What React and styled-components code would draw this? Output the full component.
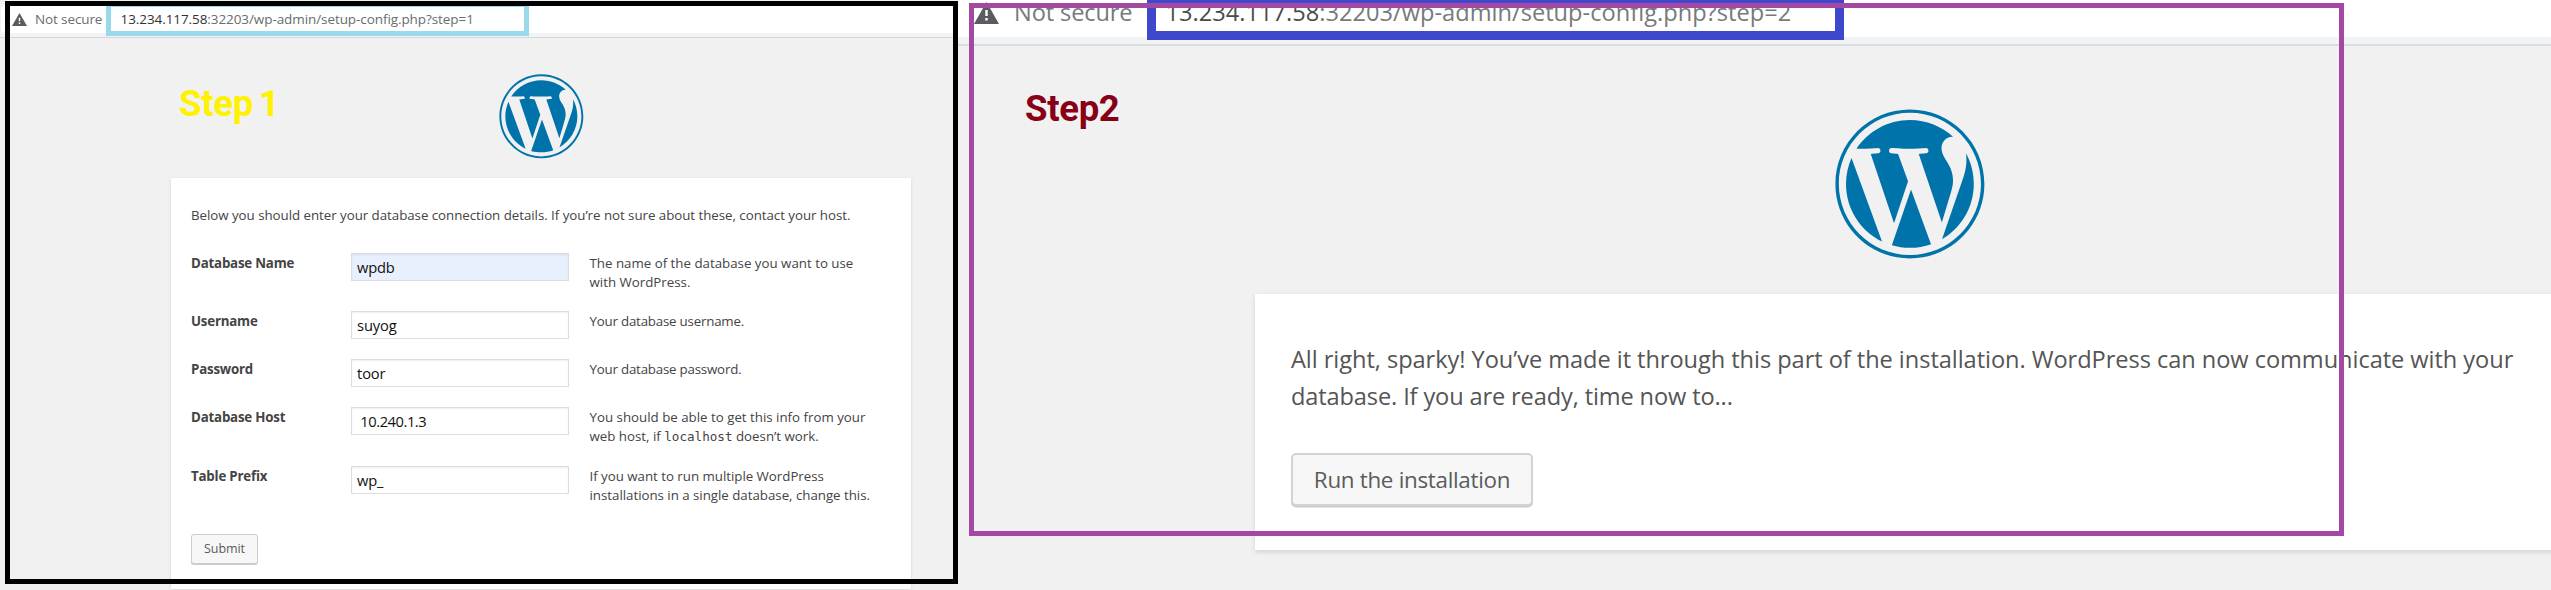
import React from "react";
import styled, { createGlobalStyle } from "styled-components";
import { FaWordpress } from "react-icons/fa";

const GlobalStyle = createGlobalStyle`
  *, *::before, *::after { box-sizing: border-box; }
  html, body { margin: 0; background: #f1f1f1; }
  body {
    overflow: hidden;
    font-family: "Open Sans", "Noto Sans", sans-serif;
    color: #444;
  }
  p { margin: 0; }
`;

const Page = styled.div`
  position: relative;
  display: flex;
  width: 2551px;
  height: 590px;
  overflow: hidden;
`;

const Panel = styled.section`
  flex: none;
  width: ${(p) => p.$width}px;
  height: 590px;
  overflow: hidden;
  background: #f1f1f1;
`;

/* Browser address bar */
const Toolbar = styled.header`
  height: ${(p) => (p.$large ? 46 : 38)}px;
  padding: ${(p) => (p.$large ? "0" : "5px 0 0 1px")};
  border-bottom: ${(p) => (p.$large ? "2px solid #d9dce0" : "1px solid #d5d7da")};
  background: #f2f3f5;
`;

const AddressBar = styled.div`
  display: flex;
  align-items: center;
  height: ${(p) => (p.$large ? 37 : 28)}px;
  padding: ${(p) => (p.$large ? "0 0 12px 16px" : "0 0 0 11px")};
  border-radius: ${(p) => (p.$large ? 0 : "5px 0 0 5px")};
  background: #fff;
  font-size: ${(p) => (p.$large ? 23.6 : 13.5)}px;
  line-height: ${(p) => (p.$large ? 25 : 28)}px;
  white-space: pre;
`;

const Warning = styled.svg`
  flex: none;
  width: ${(p) => (p.$large ? 25 : 15)}px;
  height: ${(p) => (p.$large ? 22 : 13)}px;
`;

const Security = styled.span`
  flex: none;
  width: ${(p) => (p.$large ? 151.5 : 85.5)}px;
  margin-left: ${(p) => (p.$large ? 15 : 8)}px;
  color: ${(p) => (p.$large ? "#77797c" : "#6a6c6f")};
  letter-spacing: -0.12px;
`;

const Url = styled.span`
  color: ${(p) => (p.$large ? "#77797c" : "#6a6c6f")};
  letter-spacing: ${(p) => (p.$large ? 0.02 : -0.08)}px;
`;

const Host = styled.span`
  color: ${(p) => (p.$large ? "#4b4b4e" : "#333")};
`;

/* WordPress set-up page */
const LogoRow = styled.div`
  display: flex;
  justify-content: center;
  width: ${(p) => p.$width}px;
  margin-left: ${(p) => p.$left}px;
  padding-top: ${(p) => p.$top}px;
  color: #0073aa;
  svg { display: block; }
`;

const Card = styled.main`
  width: ${(p) => p.$width}px;
  height: ${(p) => p.$height}px;
  margin: ${(p) => p.$margin};
  padding: ${(p) => p.$padding};
  background: #fff;
  box-shadow: ${(p) =>
    p.$large ? "0 2px 5px rgba(0,0,0,.13)" : "0 1px 3px rgba(0,0,0,.13)"};
`;

const Intro = styled.p`
  font-size: 13.3px;
  line-height: 19px;
  letter-spacing: -0.03px;
  white-space: nowrap;
`;

const Fields = styled.div`
  display: grid;
  grid-template-columns: 160px 218px 1fr;
  grid-template-rows: 58px 48px 48px 59px 68px;
  margin-top: 28px;
`;

const Label = styled.label`
  padding-top: 1px;
  font-size: 13.3px;
  font-weight: 700;
  line-height: 19px;
  letter-spacing: -0.2px;
`;

const TextInput = styled.input`
  width: 218px;
  height: 28px;
  margin: 0;
  padding: 1px 5px 0;
  border: 1px solid #ddd;
  border-radius: 0;
  outline: 0;
  background: ${(p) => (p.$filled ? "#e8f0fe" : "#fff")};
  box-shadow: inset 0 1px 2px rgba(0, 0, 0, 0.07);
  color: #111;
  font: 14.7px "Open Sans", "Noto Sans", sans-serif;
  letter-spacing: ${(p) => p.$tracking}px;
`;

const Help = styled.p`
  padding: 1px 0 0 20.5px;
  font-size: 13.3px;
  line-height: 19px;
  letter-spacing: ${(p) => p.$tracking}px;
  white-space: nowrap;
`;

const Code = styled.code`
  font: 12.6px/1 "DejaVu Sans Mono", monospace;
  letter-spacing: 0;
`;

const Button = styled.button`
  display: block;
  width: ${(p) => (p.$large ? 242 : 67)}px;
  height: ${(p) => (p.$large ? 53 : 30)}px;
  margin: ${(p) => (p.$large ? "37px 0 0" : "0")};
  padding: 0;
  border: ${(p) => (p.$large ? 2 : 1)}px solid ${(p) => (p.$large ? "#d3d3d3" : "#ccc")};
  border-radius: ${(p) => (p.$large ? 5 : 3)}px;
  background: #f7f7f7;
  box-shadow: 0 ${(p) => (p.$large ? 1.5 : 1)}px 0 #ccc;
  color: #5b5b5b;
  font: ${(p) => (p.$large ? 22.4 : 12.5)}px "Open Sans", "Noto Sans", sans-serif;
  letter-spacing: ${(p) => (p.$large ? -0.3 : -0.1)}px;
`;

const Message = styled.p`
  font-size: 23.6px;
  line-height: 37.3px;
  color: #555;
  white-space: nowrap;
`;

const Line = styled.span`
  display: block;
  letter-spacing: ${(p) => p.$tracking}px;
`;

/* Hand-placed marks lying over the two pages */
const Frame = styled.div`
  position: absolute;
  left: ${(p) => p.$x}px;
  top: ${(p) => p.$y}px;
  width: ${(p) => p.$w}px;
  height: ${(p) => p.$h}px;
  border: ${(p) => p.$stroke}px solid ${(p) => p.$color};
  pointer-events: none;
`;

const StepTag = styled.div`
  position: absolute;
  left: ${(p) => p.$x}px;
  top: ${(p) => p.$y}px;
  color: ${(p) => p.$color};
  font: 700 36.5px/44px Roboto, sans-serif;
  letter-spacing: -0.3px;
  word-spacing: -3px;
  white-space: nowrap;
`;

const FIELDS = [
  { id: "dbname", label: "Database Name", value: "wpdb", filled: true, t: -0.2, ht: 0,
    help: <>The name of the database you want to use<br />with WordPress.</> },
  { id: "uname", label: "Username", value: "suyog", t: -0.1, ht: -0.2, help: "Your database username." },
  { id: "pwd", label: "Password", value: "toor", t: -0.1, ht: -0.2, help: "Your database password." },
  { id: "dbhost", label: "Database Host", value: " 10.240.1.3", t: -0.45, ht: 0,
    help: <>You should be able to get this info from your<br />web host, if <Code>localhost</Code> doesn’t work.</> },
  { id: "prefix", label: "Table Prefix", value: "wp_", t: -0.2, ht: -0.02,
    help: <>If you want to run multiple WordPress<br />installations in a single database, change this.</> },
];

function BrowserBar({ large, step }) {
  return (
    <Toolbar $large={large}>
      <AddressBar $large={large}>
        <Warning $large={large} viewBox="0 0 25 22" preserveAspectRatio="none">
          <path d="M12.5 0 25 22H0Z" fill="#5a5c5f" />
          <path d="M11.3 8h2.4v6h-2.4zM11.3 16h2.4v2.6h-2.4z" fill="#fff" />
        </Warning>
        <Security $large={large}>Not secure</Security>
        <Url $large={large}>
          <Host $large={large}>13.234.117.58</Host>:32203/wp-admin/setup-config.php?step={step}
        </Url>
      </AddressBar>
    </Toolbar>
  );
}

export default function App() {
  return (
    <>
      <GlobalStyle />
      <Page>
        <Panel $width={958}>
          <BrowserBar step={1} />
          <LogoRow $width={740} $left={171} $top={34.7}>
            <FaWordpress size={86.7} />
          </LogoRow>
          <Card $width={740} $height={411} $margin="18.6px 0 0 171px" $padding="28px 20px 0">
            <Intro>
              Below you should enter your database connection details. If you’re not sure about these, contact your host.
            </Intro>
            <Fields>
              {FIELDS.map((f) => (
                <React.Fragment key={f.id}>
                  <Label htmlFor={f.id}>{f.label}</Label>
                  <TextInput id={f.id} defaultValue={f.value} $filled={f.filled} $tracking={f.t} />
                  <Help $tracking={f.ht}>{f.help}</Help>
                </React.Fragment>
              ))}
            </Fields>
            <Button>Submit</Button>
          </Card>
        </Panel>
        <Panel $width={1593}>
          <BrowserBar large step={2} />
          <LogoRow $width={1310} $left={297} $top={61}>
            <FaWordpress size={153.8} />
          </LogoRow>
          <Card $large $width={1310} $height={256} $margin="33.2px 0 0 297px" $padding="47px 36px 0">
            <Message>
              <Line $tracking={-0.05}>
                All right, sparky! You’ve made it through this part of the installation. WordPress can now communicate with your
              </Line>
              <Line $tracking={-0.13}>database. If you are ready, time now to...</Line>
            </Message>
            <Button $large>Run the installation</Button>
          </Card>
        </Panel>

        <Frame $x={106} $y={2} $w={423} $h={34} $stroke={5} $color="#99d9ea" />
        <Frame $x={5} $y={1} $w={953} $h={583} $stroke={5} $color="#000" />
        <Frame $x={1147} $y={-1} $w={697} $h={41} $stroke={9} $color="#3f48cc" />
        <Frame $x={969} $y={3} $w={1375} $h={533} $stroke={5} $color="#a349a4" />
        <StepTag $x={179} $y={82} $color="#fff200">Step 1</StepTag>
        <StepTag $x={1025} $y={87} $color="#880015">Step2</StepTag>
      </Page>
    </>
  );
}
